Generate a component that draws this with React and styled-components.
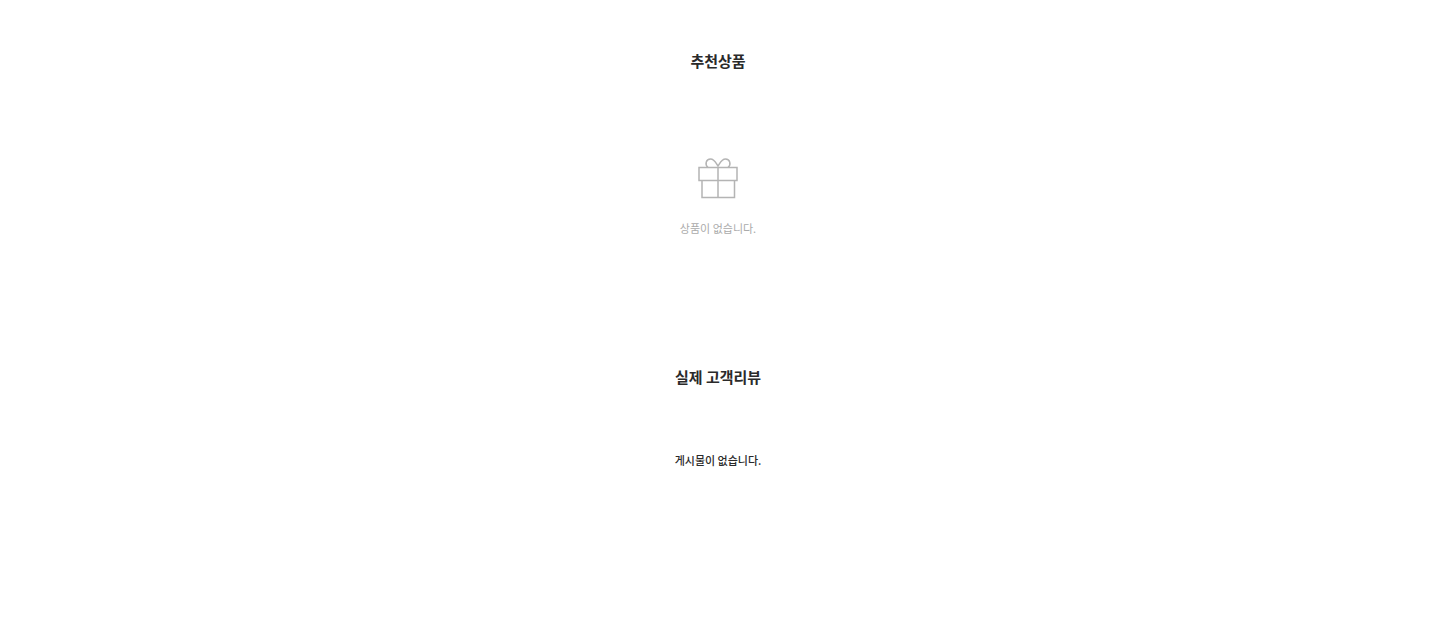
import React from "react";
import styled, { createGlobalStyle } from "styled-components";

const GlobalStyles = createGlobalStyle`
  * {
    box-sizing: border-box;
  }
  body {
    margin: 0;
    background: #fff;
    color: #2a2a2a;
    font-family: "Noto Sans CJK KR", "Noto Sans", sans-serif;
    font-size: 11px;
    line-height: 16px;
  }
`;
const SectionStyles = styled.section`
  display: flex;
  flex-direction: column;
  align-items: center;
  padding: 50px 20px 0;
  margin-bottom: 80px;
  text-align: center;
`;
const Title = styled.h2`
  margin: 0;
  font-size: 15px;
  line-height: 22px;
  font-weight: 700;
`;
const EmptyProduct = styled.div`
  display: flex;
  flex-direction: column;
  align-items: center;
  gap: 20px;
  padding-top: 86px;
  color: #aaa;
  p {
    margin: 0;
  }
`;
const EmptyReview = styled.p`
  margin: 0;
  padding-top: 64px;
  font-weight: 500;
`;

const GiftIcon = () => (
  <svg
    width="40"
    height="42"
    viewBox="0 0 40 42"
    fill="none"
    stroke="#b4b4b4"
    strokeWidth="1.5"
    aria-hidden="true"
  >
    <path d="M1 9.5H39V22.5H1Z" />
    <path d="M4 22.5V39.5H36.5V22.5M20 9.5V39.5" />
    <path d="M10 9.5C6.5 6.5 8 1 12.5 1C16.5 1 18 5 20 8C22 5 23.5 1 27.5 1C32 1 33.5 6.5 30 9.5" />
  </svg>
);

const App = () => {
  return (
    <main>
      <GlobalStyles />
      <SectionStyles>
        <Title>추천상품</Title>
        <EmptyProduct>
          <GiftIcon />
          <p>상품이 없습니다.</p>
        </EmptyProduct>
      </SectionStyles>
      <SectionStyles>
        <Title>실제 고객리뷰</Title>
        <EmptyReview>게시물이 없습니다.</EmptyReview>
      </SectionStyles>
    </main>
  );
};

export default App;
